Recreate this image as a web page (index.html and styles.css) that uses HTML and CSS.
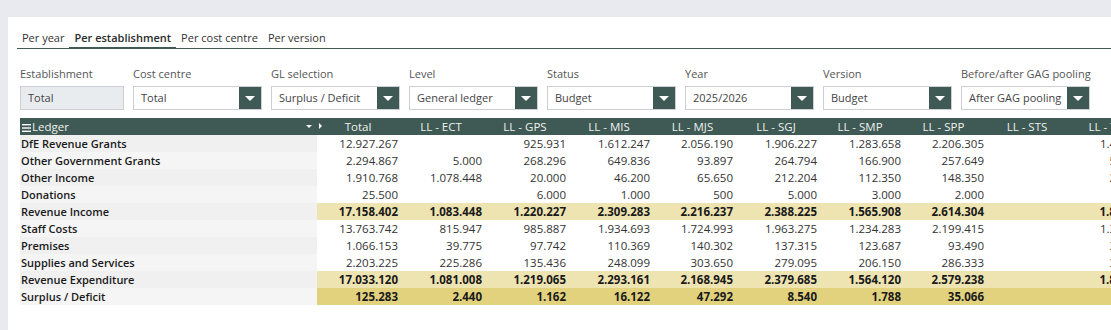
FILE: index.html
```html
<!DOCTYPE html>
<html lang="en">
<head>
    <meta charset="UTF-8">
    <title>Ledger per establishment</title>
    <link rel="stylesheet" href="styles.css">
</head>
<body>
    <div class="panel">
        <nav class="tabs">
            <a href="#">Per year</a>
            <a href="#" class="active">Per establishment</a>
            <a href="#">Per cost centre</a>
            <a href="#">Per version</a>
        </nav>

        <div class="filters">
            <div class="filter narrow">
                <label>Establishment</label>
                <div class="select disabled"><span>Total</span></div>
            </div>
            <div class="filter">
                <label>Cost centre</label>
                <div class="select"><span>Total</span><i class="caret"></i></div>
            </div>
            <div class="filter">
                <label>GL selection</label>
                <div class="select"><span>Surplus / Deficit</span><i class="caret"></i></div>
            </div>
            <div class="filter">
                <label>Level</label>
                <div class="select"><span>General ledger</span><i class="caret"></i></div>
            </div>
            <div class="filter">
                <label>Status</label>
                <div class="select"><span>Budget</span><i class="caret"></i></div>
            </div>
            <div class="filter">
                <label>Year</label>
                <div class="select"><span>2025/2026</span><i class="caret"></i></div>
            </div>
            <div class="filter">
                <label>Version</label>
                <div class="select"><span>Budget</span><i class="caret"></i></div>
            </div>
            <div class="filter">
                <label>Before/after GAG pooling</label>
                <div class="select"><span>After GAG pooling</span><i class="caret"></i></div>
            </div>
        </div>

        <div class="grid-wrap">
            <table class="grid">
                <colgroup>
                    <col class="c-label">
                    <col class="c-total">
                    <col class="c-num"><col class="c-num"><col class="c-num"><col class="c-num2">
                    <col class="c-num"><col class="c-num"><col class="c-num2"><col class="c-num">
                    <col class="c-num">
                </colgroup>
                <thead>
                    <tr>
                        <th class="ledger-head">
                            <svg class="burger" width="9" height="8" viewBox="0 0 9 8">
                                <rect x="0" y="0" width="9" height="1.4" fill="#fff"/>
                                <rect x="0" y="3.3" width="9" height="1.4" fill="#fff"/>
                                <rect x="0" y="6.6" width="9" height="1.4" fill="#fff"/>
                            </svg>Ledger
                            <span class="tools"><i class="t-down"></i><i class="t-right"></i></span>
                        </th>
                        <th>Total</th>
                        <th>LL - ECT</th>
                        <th>LL - GPS</th>
                        <th>LL - MIS</th>
                        <th>LL - MJS</th>
                        <th>LL - SGJ</th>
                        <th>LL - SMP</th>
                        <th>LL - SPP</th>
                        <th>LL - STS</th>
                        <th>LL - TWS</th>
                    </tr>
                </thead>
                <tbody>
                    <tr>
                        <td>DfE Revenue Grants</td>
                        <td>12.927.267</td><td></td><td>925.931</td><td>1.612.247</td><td>2.056.190</td>
                        <td>1.906.227</td><td>1.283.658</td><td>2.206.305</td><td></td><td>1.436.709</td>
                    </tr>
                    <tr>
                        <td>Other Government Grants</td>
                        <td>2.294.867</td><td>5.000</td><td>268.296</td><td>649.836</td><td>93.897</td>
                        <td>264.794</td><td>166.900</td><td>257.649</td><td></td><td>588.495</td>
                    </tr>
                    <tr>
                        <td>Other Income</td>
                        <td>1.910.768</td><td>1.078.448</td><td>20.000</td><td>46.200</td><td>65.650</td>
                        <td>212.204</td><td>112.350</td><td>148.350</td><td></td><td>227.566</td>
                    </tr>
                    <tr>
                        <td>Donations</td>
                        <td>25.500</td><td></td><td>6.000</td><td>1.000</td><td>500</td>
                        <td>5.000</td><td>3.000</td><td>2.000</td><td></td><td>8.000</td>
                    </tr>
                    <tr class="sub">
                        <td>Revenue Income</td>
                        <td>17.158.402</td><td>1.083.448</td><td>1.220.227</td><td>2.309.283</td><td>2.216.237</td>
                        <td>2.388.225</td><td>1.565.908</td><td>2.614.304</td><td></td><td>1.860.770</td>
                    </tr>
                    <tr>
                        <td>Staff Costs</td>
                        <td>13.763.742</td><td>815.947</td><td>985.887</td><td>1.934.693</td><td>1.724.993</td>
                        <td>1.963.275</td><td>1.234.283</td><td>2.199.415</td><td></td><td>1.305.249</td>
                    </tr>
                    <tr>
                        <td>Premises</td>
                        <td>1.066.153</td><td>39.775</td><td>97.742</td><td>110.369</td><td>140.302</td>
                        <td>137.315</td><td>123.687</td><td>93.490</td><td></td><td>323.473</td>
                    </tr>
                    <tr>
                        <td>Supplies and Services</td>
                        <td>2.203.225</td><td>225.286</td><td>135.436</td><td>248.099</td><td>303.650</td>
                        <td>279.095</td><td>206.150</td><td>286.333</td><td></td><td>319.176</td>
                    </tr>
                    <tr class="sub">
                        <td>Revenue Expenditure</td>
                        <td>17.033.120</td><td>1.081.008</td><td>1.219.065</td><td>2.293.161</td><td>2.168.945</td>
                        <td>2.379.685</td><td>1.564.120</td><td>2.579.238</td><td></td><td>1.847.898</td>
                    </tr>
                    <tr class="result">
                        <td>Surplus / Deficit</td>
                        <td>125.283</td><td>2.440</td><td>1.162</td><td>16.122</td><td>47.292</td>
                        <td>8.540</td><td>1.788</td><td>35.066</td><td></td><td>12.872</td>
                    </tr>
                </tbody>
            </table>
        </div>
    </div>
</body>
</html>
```

FILE: styles.css
```css
body {
    margin: 0;
    background-color: #e9eaef;
    font-family: "Open Sans", "Liberation Sans", Arial, sans-serif;
    font-size: 11px;
    color: #333;
}

.panel {
    margin: 17px 0 0 8px;
    height: 313px;
    background: #fff;
    padding: 11px 0 0 9px;
    box-sizing: border-box;
    overflow: hidden;
}

/* Tabs */
.tabs {
    display: flex;
    height: 20px;
    border-bottom: 1px solid #3f5954;
}

.tabs a {
    padding: 0 5px;
    line-height: 20px;
    color: #333;
    text-decoration: none;
}

.tabs a.active {
    font-weight: 600;
    color: #2b2b2b;
    border-bottom: 2px solid #3f5954;
    margin-bottom: -1px;
}

/* Filters */
.filters {
    display: flex;
    gap: 9px;
    margin: 18px 0 0 3px;
}

.filter {
    width: 129px;
}

.filter.narrow {
    width: 104px;
}

.filter label {
    display: block;
    line-height: 14px;
    color: #555;
    margin-bottom: 5px;
    white-space: nowrap;
}

.select {
    display: flex;
    height: 24px;
    border: 1px solid #ccd0d4;
    box-sizing: border-box;
    background: #fff;
}

.select span {
    flex: 1;
    line-height: 22px;
    padding-left: 7px;
    color: #444;
    white-space: nowrap;
    overflow: hidden;
}

.select.disabled {
    background: #e9ecef;
}

.caret {
    width: 22px;
    background: #3f5954;
    position: relative;
}

.caret::after {
    content: "";
    position: absolute;
    left: 6px;
    top: 9px;
    border-left: 5px solid transparent;
    border-right: 5px solid transparent;
    border-top: 5px solid #fff;
}

/* Grid */
.grid-wrap {
    margin: 8px 0 0 3px;
    overflow: hidden;
}

.grid {
    border-collapse: collapse;
    table-layout: fixed;
    width: 1133px;
    font-size: 11.5px;
}

.c-label { width: 297px; }
.c-total { width: 82px; }
.c-num { width: 84px; }
.c-num2 { width: 83px; }

.grid th {
    height: 17px;
    padding: 0;
    background: #3f5954;
    color: #eef2ee;
    font-weight: 400;
    text-align: center;
    white-space: nowrap;
}

.grid th.ledger-head {
    text-align: left;
    padding: 0 0 0 2px;
    position: relative;
}

.burger {
    margin-right: 1px;
    vertical-align: -1px;
}

.tools {
    position: absolute;
    right: -5px;
    top: 6px;
    display: flex;
    gap: 7px;
}

.t-down {
    border-left: 3px solid transparent;
    border-right: 3px solid transparent;
    border-top: 3px solid #fff;
    margin-top: 1px;
}

.t-right {
    border-top: 3px solid transparent;
    border-bottom: 3px solid transparent;
    border-left: 3px solid #fff;
    margin-top: -1px;
}

.grid td {
    height: 17px;
    padding: 0 1px 0 0;
    text-align: right;
    white-space: nowrap;
    overflow: hidden;
    color: #333;
}

.grid td:first-child {
    text-align: left;
    padding-left: 1px;
    font-size: 11px;
    font-weight: 600;
    color: #1a1a1a;
    background: #f0f0f0;
}

.grid tbody tr:nth-child(even) td:first-child {
    background: #f5f5f5;
}

.grid tr.sub td {
    background: #eee4b1;
    font-weight: 700;
    color: #1a1a1a;
}

.grid tr.result td {
    background: #e2d27e;
    font-weight: 700;
    color: #1a1a1a;
}

.grid tr.sub td:first-child,
.grid tr.result td:first-child {
    background: #f0f0f0;
    font-weight: 600;
}

.grid tr.sub:nth-child(even) td:first-child,
.grid tr.result:nth-child(even) td:first-child {
    background: #f5f5f5;
}
```
